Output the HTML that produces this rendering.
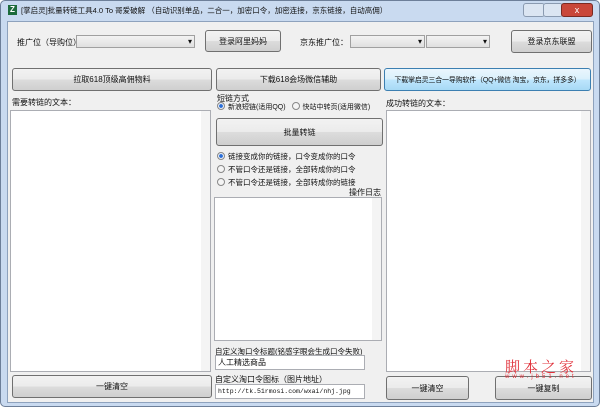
<html><head><style>
body{margin:0;width:600px;height:407px;overflow:hidden;background:#fff;font-family:"Liberation Sans","Noto Sans CJK SC",sans-serif;font-size:8px;color:#111;position:relative}
.a{position:absolute;white-space:nowrap}
.win{left:0;top:0;width:598px;height:405px;background:#c9daf0;border:1px solid #6d7f99;border-radius:5px}
.cl{left:7px;top:21px;width:585px;height:380px;background:#f0f0f0;border:1px solid #8ea2bd}
.btn{position:absolute;white-space:nowrap;border:1px solid #707070;border-radius:3px;background:linear-gradient(#f2f2f2 0%,#ebebeb 50%,#dcdcdc 51%,#cfcfcf 100%);text-align:center;font-size:8px;display:flex;align-items:center;justify-content:center}
.ta{position:absolute;background:#fff;border:1px solid #abadb3}
.cb{position:absolute;background:linear-gradient(#f3f3f3,#e0e0e0);border:1px solid #a0a0a0;height:11px}
.cb:after{content:"▾";position:absolute;right:2px;top:0;font-size:8px;line-height:11px}
.sb{position:absolute;right:0;top:0;bottom:0;width:9px;background:#f4f4f4}
.r{position:absolute;font-size:7.5px;white-space:nowrap}
.r i{display:inline-block;width:6px;height:6px;border-radius:50%;border:1px solid #888;background:#f4f4f4;vertical-align:-1px;margin-right:3px}
.r i.on{background:radial-gradient(#2a6ed8 40%,#e8eef8 50%)}
</style></head><body>
<div class="a win"></div>
<div class="a" style="left:8px;top:5px;width:9px;height:10px;background:#1d6b3c;color:#fff;font-size:8px;line-height:10px;text-align:center;font-weight:bold">Z</div>
<div class="a" style="left:21px;top:5px;font-size:7.5px">[掌启灵]批量转链工具4.0 To 哥爱破解 （自动识别单品，二合一，加密口令，加密连接，京东链接，自动高佣）</div>
<div class="a" style="left:523px;top:3px;width:20px;height:12px;background:#dbe5f2;border:1px solid #8a9ab0;border-radius:3px"></div>
<div class="a" style="left:543px;top:3px;width:18px;height:12px;background:#dbe5f2;border:1px solid #8a9ab0;border-radius:3px"></div>
<div class="a" style="left:561px;top:3px;width:30px;height:12px;background:#c9473a;border:1px solid #7a2a22;border-radius:3px;color:#fff;font-size:9px;text-align:center;line-height:12px">x</div>
<div class="a cl"></div>
<div class="a" style="left:17px;top:37px">推广位（导购位）：</div>
<div class="cb" style="left:76px;top:35px;width:117px"></div>
<div class="btn" style="left:205px;top:30px;width:74px;height:20px">登录阿里妈妈</div>
<div class="a" style="left:300px;top:37px">京东推广位：</div>
<div class="cb" style="left:350px;top:35px;width:73px"></div>
<div class="cb" style="left:426px;top:35px;width:62px"></div>
<div class="btn" style="left:511px;top:30px;width:79px;height:21px">登录京东联盟</div>
<div class="btn" style="left:12px;top:68px;width:198px;height:21px">拉取618顶级高佣物料</div>
<div class="btn" style="left:216px;top:68px;width:163px;height:21px">下载618会场微信辅助</div>
<div class="btn" style="left:384px;top:68px;width:205px;height:21px;font-size:7px;letter-spacing:-0.2px;border-color:#3c7fb1;background:linear-gradient(#eaf6fd,#d9f0fc 50%,#bee6fd 51%,#a7d9f5)">下载掌启灵三合一导购软件（QQ+微信 淘宝，京东，拼多多）</div>
<div class="a" style="left:12px;top:97px">需要转链的文本：</div>
<div class="a" style="left:217px;top:93px">短链方式</div>
<div class="r" style="left:217px;top:102px;font-size:7px"><i class="on"></i>新浪短链(适用QQ) <i style="margin-left:4px"></i>快站中转页(适用微信)</div>
<div class="a" style="left:386px;top:98px">成功转链的文本：</div>
<div class="ta" style="left:10px;top:110px;width:199px;height:260px"><div class="sb"></div></div>
<div class="ta" style="left:386px;top:110px;width:203px;height:260px"><div class="sb"></div></div>
<div class="btn" style="left:216px;top:118px;width:165px;height:26px">批量转链</div>
<div class="r" style="left:217px;top:151px"><i class="on"></i>链接变成你的链接，口令变成你的口令</div>
<div class="r" style="left:217px;top:164px"><i></i>不管口令还是链接，全部转成你的口令</div>
<div class="r" style="left:217px;top:177px"><i></i>不管口令还是链接，全部转成你的链接</div>
<div class="a" style="left:349px;top:187px">操作日志</div>
<div class="ta" style="left:214px;top:197px;width:166px;height:142px"><div class="sb"></div></div>
<div class="a" style="left:215px;top:346px;font-size:7.5px">自定义淘口令标题(铭感字眼会生成口令失败)</div>
<div class="ta" style="left:215px;top:355px;width:146px;height:13px;padding-left:2px;font-size:8px;line-height:13px">人工精选商品</div>
<div class="a" style="left:215px;top:374px">自定义淘口令图标（图片地址）</div>
<div class="ta" style="left:215px;top:384px;width:146px;height:13px;padding-left:2px;font-family:'Liberation Mono',monospace;font-size:6.5px;line-height:13px;overflow:hidden;white-space:nowrap">http://tk.51rmosi.com/wxai/nhj.jpg</div>
<div class="btn" style="left:12px;top:375px;width:198px;height:21px">一键清空</div>
<div class="btn" style="left:386px;top:376px;width:81px;height:22px">一键清空</div>
<div class="btn" style="left:495px;top:376px;width:95px;height:22px">一键复制</div>
<div class="a" style="left:505px;top:356px;color:#e0303a;font-size:15px;font-family:'Noto Serif CJK SC',serif;letter-spacing:3px">脚本之家</div>
<div class="a" style="left:505px;top:374px;color:#e0303a;font-size:6px;letter-spacing:3px">www.jb51.net</div>
</body></html>
